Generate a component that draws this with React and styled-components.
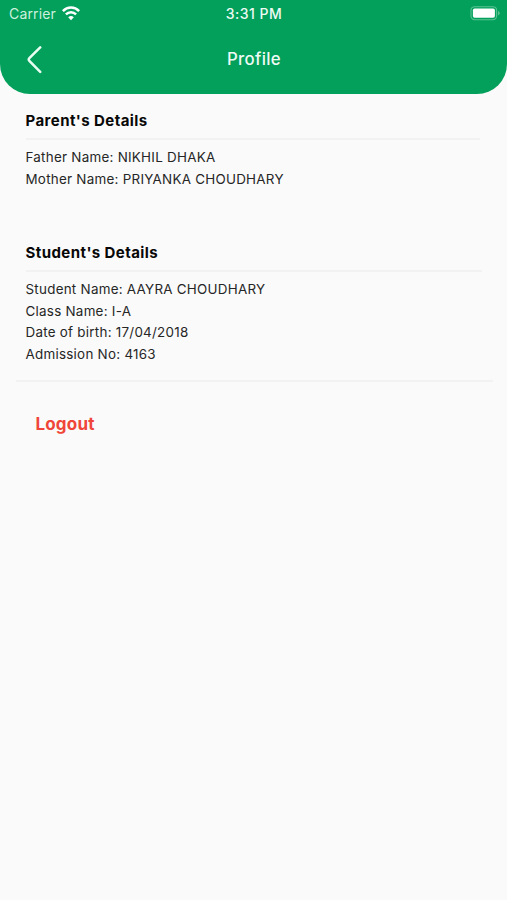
import React from 'react';
import styled, { createGlobalStyle } from 'styled-components';

const GlobalStyle = createGlobalStyle`
  * { box-sizing: border-box; }
  body {
    margin: 0;
    background: #fafafa;
    font-family: Inter, 'Liberation Sans', sans-serif;
  }
`;

const Screen = styled.div`
  display: flex;
  flex-direction: column;
  min-height: 900px;
  background: #fafafa;
`;

const Header = styled.header`
  height: 93.5px;
  background: #02a05b;
  border-radius: 0 0 30px 30px;
  color: #effaf4;
`;

const StatusBar = styled.div`
  display: grid;
  grid-template-columns: 1fr auto 1fr;
  align-items: center;
  height: 27px;
  padding: 0 7px 0 9px;
  font-size: 14px;
  line-height: 27px;
`;

const Carrier = styled.div`
  display: flex;
  align-items: center;
  gap: 6px;
  color: #cdf0de;
  letter-spacing: 0.16px;
`;

const Clock = styled.div`
  margin-left: -1px;
  font-weight: 500;
  font-size: 14px;
  letter-spacing: 0.5px;
`;

const Battery = styled.svg`
  display: block;
  justify-self: end;
`;

const NavBar = styled.div`
  display: grid;
  grid-template-columns: 60px 1fr 60px;
  align-items: center;
  height: 65px;
`;

const BackButton = styled.button`
  display: flex;
  padding: 0 0 0 26px;
  border: 0;
  background: none;
`;

const Title = styled.h1`
  margin: 0 0 1px;
  padding-left: 1px;
  text-align: center;
  font-size: 16.8px;
  line-height: 22px;
  font-weight: 500;
  letter-spacing: 0.3px;
`;

const Section = styled.section`
  margin: ${(p) => p.$top}px ${(p) => p.$right}px 0 25.5px;
`;

const Heading = styled.h2`
  margin: 0;
  height: 30px;
  line-height: 22px;
  border-bottom: 2px solid #f2f2f2;
  color: #080808;
  font-size: 15px;
  font-weight: 700;
  letter-spacing: 0.43px;
`;

const Details = styled.div`
  padding-top: 7.6px;
`;

const Line = styled.p`
  margin: 0;
  color: #262626;
  font-size: 13.4px;
  line-height: 21.6px;
  letter-spacing: 0.26px;
`;

const Divider = styled.hr`
  width: 477px;
  height: 2px;
  margin: 14.5px 0 0 16px;
  border: 0;
  background: #f2f2f2;
`;

const LogoutButton = styled.button`
  align-self: flex-start;
  margin: 31px 0 0 35.4px;
  padding: 0;
  border: 0;
  background: none;
  color: #ef4639;
  font: 700 17px/22px Inter, sans-serif;
  letter-spacing: 0.2px;
`;

const parents = ['Father Name: NIKHIL DHAKA', 'Mother Name: PRIYANKA CHOUDHARY'];
const student = [
  'Student Name: AAYRA CHOUDHARY',
  'Class Name: I-A',
  'Date of birth: 17/04/2018',
  'Admission No: 4163',
];

const DetailSection = ({ title, lines, top, right }) => (
  <Section $top={top} $right={right}>
    <Heading>{title}</Heading>
    <Details>
      {lines.map((line) => <Line key={line}>{line}</Line>)}
    </Details>
  </Section>
);

const WifiIcon = () => (
  <svg width="18" height="15" viewBox="0 0 18 15" fill="none" stroke="#fff" strokeWidth="2.5">
    <path d="M.9 5.1C5.4.4 12.6.4 17.1 5.1" />
    <path d="M3.9 8.3C6.8 5.4 11.2 5.4 14.1 8.3" />
    <path d="M9 14.2 6.2 11.3Q9 8.9 11.8 11.3Z" fill="#fff" stroke="none" />
  </svg>
);

export default function App() {
  return (
    <Screen>
      <GlobalStyle />
      <Header>
        <StatusBar>
          <Carrier>Carrier <WifiIcon /></Carrier>
          <Clock>3:31 PM</Clock>
          <Battery width="30" height="15" viewBox="0 0 30 15">
            <rect x="1" y=".7" width="25.6" height="13" rx="3.6" fill="none" stroke="#5cc192" strokeWidth="1.1" />
            <rect x="2.9" y="2.6" width="22" height="9.2" rx="1.7" fill="#fff" />
            <path d="M28 5Q29.7 5.6 29.7 7.2T28 9.4Z" fill="#5cc192" />
          </Battery>
        </StatusBar>
        <NavBar>
          <BackButton aria-label="Back">
            <svg width="17" height="28" viewBox="0 0 17 28" fill="none" stroke="#eafff4" strokeWidth="2.5" strokeLinecap="round" strokeLinejoin="round">
              <path d="M14.2 1.4 3.6 11.8Q1.9 13.5 3.6 15.2L14.2 25.9" />
            </svg>
          </BackButton>
          <Title>Profile</Title>
        </NavBar>
      </Header>
      <DetailSection title="Parent's Details" lines={parents} top={16} right={27} />
      <DetailSection title="Student's Details" lines={student} top={51.4} right={25} />
      <Divider />
      <LogoutButton>Logout</LogoutButton>
    </Screen>
  );
}
